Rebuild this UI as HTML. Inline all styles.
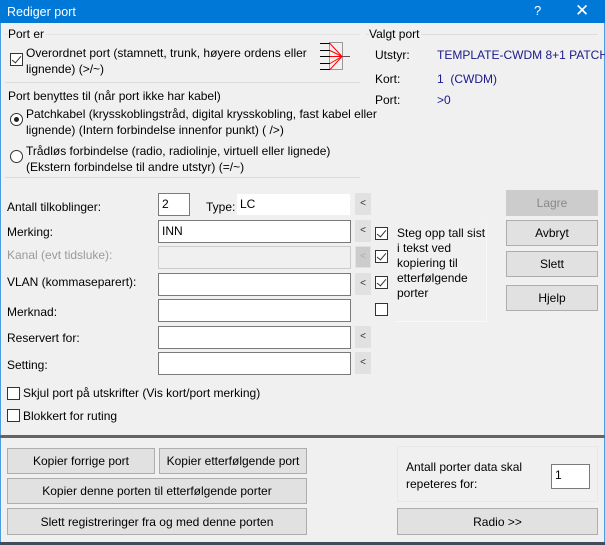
<!DOCTYPE html>
<html><head><meta charset="utf-8"><style>
*{box-sizing:border-box;margin:0;padding:0}
body{width:605px;height:545px;overflow:hidden;background:#f0f0f0;font-family:"Liberation Sans",sans-serif;font-size:12px;color:#000;position:relative}
.a{position:absolute;white-space:nowrap}
.title{left:0;top:0;width:605px;height:23px;background:#0078d7;color:#fff;font-size:12.5px;padding:5px 0 0 7px}
.inp{position:absolute;background:#fff;border:1px solid #7a7a7a;height:23px;padding:3px 0 0 3px}
.lt{position:absolute;width:16px;height:22px;background:#e1e1e1;border:1px solid #e1e1e1;font-size:10px;text-align:center;line-height:20px;color:#333}
.btn{position:absolute;background:#e1e1e1;border:1px solid #adadad;text-align:center;font-size:12px;display:flex;align-items:center;justify-content:center}
.cb{position:absolute;width:13px;height:13px;border:1px solid #333;background:#fff}
.cb.on::after{content:"";position:absolute;left:3px;top:0px;width:4px;height:8px;border:solid #333;border-width:0 1px 1px 0;transform:rotate(40deg)}
.rb{position:absolute;width:13px;height:13px;border:1px solid #333;border-radius:50%;background:#fff}
.rb.on::after{content:"";position:absolute;left:3px;top:3px;width:5px;height:5px;border-radius:50%;background:#222}
.hl{position:absolute;height:1px;background:#dcdcdc}
.blue{color:#1a1a8c}
</style></head><body>
<div class="a title">Rediger port</div>
<div class="a" style="left:534px;top:3px;color:#fff;font-size:13px">?</div>
<div class="a" style="left:575px;top:1px;color:#fff;font-size:17px">✕</div>
<div class="a" style="left:0;top:23px;width:1px;height:520px;background:#4a9de0"></div>
<div class="a" style="left:604px;top:23px;width:1px;height:520px;background:#4a9de0"></div>

<div class="hl" style="left:5px;top:34px;width:355px;background:#e4e4e4"></div>
<div class="a" style="left:8px;top:27px;background:#f0f0f0;padding-right:2px">Port er</div>
<div class="cb on" style="left:10px;top:53px"></div>
<div class="a" style="left:26px;top:45px;line-height:16px">Overordnet port (stamnett, trunk, høyere ordens eller<br>lignende) (&gt;/~)</div>
<svg class="a" style="left:318px;top:40px" width="34" height="34">
<rect x="11.5" y="2.5" width="13" height="27" fill="none" stroke="#999"/>
<g stroke="#000"><line x1="2" y1="3.5" x2="12" y2="3.5"/><line x1="2" y1="10.5" x2="12" y2="10.5"/><line x1="2" y1="16.5" x2="12" y2="16.5"/><line x1="2" y1="23.5" x2="12" y2="23.5"/><line x1="2" y1="29.5" x2="12" y2="29.5"/></g>
<line x1="24" y1="16.5" x2="32" y2="16.5" stroke="#555"/>
<g stroke="#f00"><line x1="12" y1="3.5" x2="24" y2="16.5"/><line x1="12" y1="10.5" x2="24" y2="16.5"/><line x1="12" y1="16.5" x2="24" y2="16.5"/><line x1="12" y1="23.5" x2="24" y2="16.5"/><line x1="12" y1="29.5" x2="24" y2="16.5"/></g>
</svg>
<div class="hl" style="left:5px;top:82px;width:355px"></div>
<div class="a" style="left:8px;top:89px">Port benyttes til (når port ikke har kabel)</div>
<div class="rb on" style="left:10px;top:113px"></div>
<div class="a" style="left:26px;top:106px;line-height:16px">Patchkabel (krysskoblingstråd, digital krysskobling, fast kabel eller<br>lignende) (Intern forbindelse innenfor punkt) ( /&gt;)</div>
<div class="rb" style="left:10px;top:150px"></div>
<div class="a" style="left:26px;top:143px;line-height:16px">Trådløs forbindelse (radio, radiolinje, virtuell eller lignede)<br>(Ekstern forbindelse til andre utstyr) (=/~)</div>
<div class="hl" style="left:5px;top:177px;width:355px"></div>

<div class="hl" style="left:366px;top:34px;width:232px"></div>
<div class="a" style="left:369px;top:27px;background:#f0f0f0;padding-right:2px">Valgt port</div>
<div class="a" style="left:375px;top:48px">Utstyr:</div><div class="a blue" style="left:437px;top:48px">TEMPLATE-CWDM 8+1 PATCH</div>
<div class="a" style="left:375px;top:72px">Kort:</div><div class="a blue" style="left:437px;top:72px">1&nbsp; (CWDM)</div>
<div class="a" style="left:375px;top:93px">Port:</div><div class="a blue" style="left:437px;top:93px">&gt;0</div>

<div class="a" style="left:7px;top:200px">Antall tilkoblinger:</div>
<div class="inp" style="left:158px;top:193px;width:32px">2</div>
<div class="a" style="left:206px;top:200px">Type:</div>
<div class="inp" style="left:236px;top:193px;width:115px;border-color:#f0f0f0">LC</div>
<div class="a" style="left:7px;top:225px">Merking:</div>
<div class="inp" style="left:158px;top:220px;width:193px">INN</div>
<div class="a" style="left:7px;top:248px;color:#9a9a9a">Kanal (evt tidsluke):</div>
<div class="inp" style="left:158px;top:246px;width:193px;background:#f0f0f0;border-color:#ccc"></div>
<div class="a" style="left:7px;top:275px">VLAN (kommaseparert):</div>
<div class="inp" style="left:158px;top:273px;width:193px"></div>
<div class="a" style="left:7px;top:305px">Merknad:</div>
<div class="inp" style="left:158px;top:299px;width:193px"></div>
<div class="a" style="left:7px;top:331px">Reservert for:</div>
<div class="inp" style="left:158px;top:326px;width:193px"></div>
<div class="a" style="left:7px;top:358px">Setting:</div>
<div class="inp" style="left:158px;top:352px;width:193px"></div>
<div class="lt" style="left:355px;top:193px">&lt;</div>
<div class="lt" style="left:355px;top:220px">&lt;</div>
<div class="lt" style="left:355px;top:246px;background:#ccc;color:#aaa">&lt;</div>
<div class="lt" style="left:355px;top:273px">&lt;</div>
<div class="lt" style="left:355px;top:326px">&lt;</div>
<div class="lt" style="left:355px;top:352px">&lt;</div>

<div class="cb on" style="left:375px;top:227px"></div>
<div class="cb on" style="left:375px;top:250px"></div>
<div class="cb on" style="left:375px;top:276px"></div>
<div class="cb" style="left:375px;top:303px"></div>
<div class="a" style="left:396px;top:223px;width:91px;height:99px;border:1px solid #f8f8f8;border-left:none;border-top:none;padding:3px 0 0 1px;line-height:15px;white-space:normal">Steg opp tall sist i tekst ved kopiering til etterfølgende porter</div>

<div class="btn" style="left:506px;top:190px;width:92px;height:26px;background:#ccc;border-color:#ccc;color:#888">Lagre</div>
<div class="btn" style="left:506px;top:220px;width:92px;height:26px">Avbryt</div>
<div class="btn" style="left:506px;top:251px;width:92px;height:26px">Slett</div>
<div class="btn" style="left:506px;top:285px;width:92px;height:26px">Hjelp</div>

<div class="cb" style="left:7px;top:387px"></div>
<div class="a" style="left:23px;top:386px">Skjul port på utskrifter (Vis kort/port merking)</div>
<div class="cb" style="left:7px;top:409px"></div>
<div class="a" style="left:23px;top:409px">Blokkert for ruting</div>

<div class="a" style="left:0;top:435px;width:605px;height:3px;background:#646464"></div>

<div class="btn" style="left:7px;top:448px;width:148px;height:26px">Kopier forrige port</div>
<div class="btn" style="left:159px;top:448px;width:148px;height:26px">Kopier etterfølgende port</div>
<div class="btn" style="left:7px;top:478px;width:300px;height:26px">Kopier denne porten til etterfølgende porter</div>
<div class="btn" style="left:7px;top:508px;width:300px;height:27px">Slett registreringer fra og med denne porten</div>

<div class="a" style="left:397px;top:446px;width:201px;height:56px;border:1px solid #e8e8e8"></div>
<div class="a" style="left:406px;top:459px;line-height:17px">Antall porter data skal<br>repeteres for:</div>
<div class="inp" style="left:551px;top:464px;width:39px;height:25px">1</div>
<div class="btn" style="left:397px;top:508px;width:201px;height:27px">Radio &gt;&gt;</div>

<div class="a" style="left:0;top:542px;width:605px;height:3px;background:#3f4d5c"></div>
</body></html>
